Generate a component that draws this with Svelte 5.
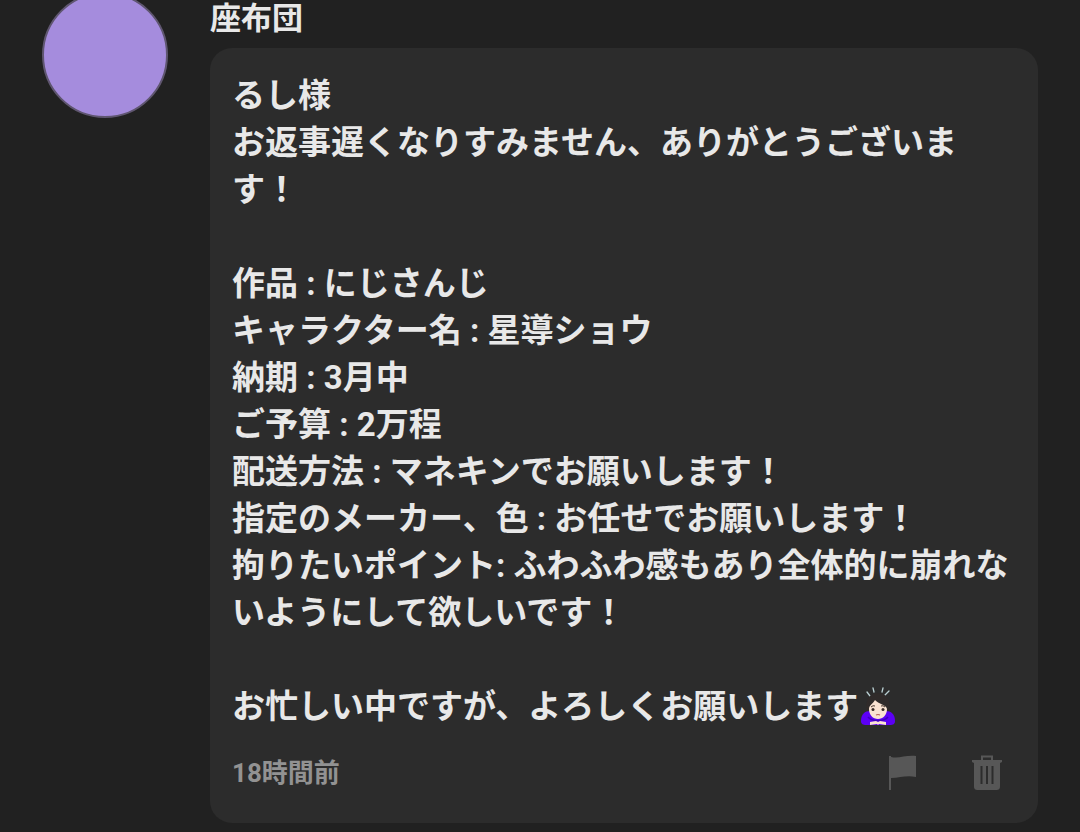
<script lang="ts">
	const author = '座布団'
	const postedAt = '18時間前'

	const body = [
		'るし様',
		'お返事遅くなりすみません、ありがとうございます！',
		'',
		'作品 : にじさんじ',
		'キャラクター名 : 星導ショウ',
		'納期 : 3月中',
		'ご予算 : 2万程',
		'配送方法 : マネキンでお願いします！',
		'指定のメーカー、色 : お任せでお願いします！',
		'拘りたいポイント: ふわふわ感もあり全体的に崩れないようにして欲しいです！',
		'',
		'お忙しい中ですが、よろしくお願いします'
	].join('\n')
</script>

<article class="comment">
	<div class="avatar"></div>

	<div class="content">
		<h2 class="author">{author}</h2>

		<div class="bubble">
			<p class="body">{body}<svg class="emoji" viewBox="0 0 36 40" role="img" aria-label="お辞儀">
					<g stroke="#b9cfd2" stroke-width="1.3" stroke-linecap="round">
						<path d="M7 5l3 4M13 1l1 4M23 1l-1 4M29 4l-4 4" />
					</g>
					<path d="M7 27C4 14 9 6 18 6s14 8 11 21z" fill="#302b2a" />
					<path d="M1 34c0-7 4-10 9-10h16c5 0 9 3 9 10 0 3-2 4-5 4H6c-3 0-5-1-5-4z" fill="#5c00f5" />
					<path d="M9 22c0-4 4-5 6-9 3 4 12 5 12 9 0 6-4 10-9 10S9 28 9 22z" fill="#fbe3d2" />
					<path d="M8 30c4 5 16 5 20 0" fill="none" stroke="#4200bd" stroke-width="1.5" />
					<path d="M10 35l6-1 2 1 2-1 6 1v3l-7-1-1 1-1-1-7 1z" fill="#fbe3d2" />
					<path d="M11 20q2-2 4-1M21 19q2-1 4 1" fill="none" stroke="#4a3930" stroke-width="1" />
					<circle cx="13" cy="22.500" r="1.500" fill="#3b2c27" />
					<circle cx="23" cy="22.500" r="1.500" fill="#3b2c27" />
					<path d="M16 28q2-1 4 0" fill="none" stroke="#b65e57" stroke-width="1.1" />
				</svg></p>

			<footer class="footer">
				<time class="time">{postedAt}</time>
				<div class="actions">
					<button class="action" type="button" aria-label="報告">
						<svg viewBox="0 0 36 36" fill="currentColor">
							<path d="M3 1h2v1c8 2 14-2 25-1v21c-10-2-16 1-25 1v12H3z" />
						</svg>
					</button>
					<button class="action" type="button" aria-label="削除">
						<svg viewBox="0 0 36 36">
							<path d="M12 6V1.500h10V6" fill="none" stroke="currentColor" stroke-width="2" />
							<path d="M2 5h30v2l-2 1v23c0 3-1 4-4 4H8c-3 0-4-1-4-4V8L2 7z" fill="currentColor" />
							<path d="M11.500 11v18M17 11v18M22.500 11v18" stroke="#2c2c2c" stroke-width="2" />
						</svg>
					</button>
				</div>
			</footer>
		</div>
	</div>
</article>

<style>
	:global(body) {
		background: #212121;
	}

	.comment {
		display: flex;
		align-items: flex-start;
		gap: 42px;
		padding: 0 42px 9px;
		font-family: Roboto, 'Noto Sans CJK JP', sans-serif;
		font-weight: 700;
		color: #e8e8e8;
	}

	.avatar {
		flex: none;
		box-sizing: border-box;
		width: 126px;
		height: 126px;
		margin-top: -8px;
		border: 2px solid #5f5670;
		border-radius: 50%;
		background: #a58cdd;
	}

	.content {
		flex: 1;
		min-width: 0;
	}

	.author {
		margin: 0 0 10px;
		font-size: 31px;
		line-height: 38px;
	}

	.bubble {
		padding: 24px 22px 30px;
		border-radius: 22px;
		background: #2c2c2c;
	}

	.body {
		margin: 0;
		font-size: 33px;
		line-height: 47px;
		white-space: pre-wrap;
		overflow-wrap: anywhere;
	}

	.emoji {
		width: 36px;
		height: 40px;
		margin-left: 2px;
		vertical-align: -9px;
	}

	.footer {
		display: flex;
		align-items: center;
		justify-content: space-between;
		margin-top: 23px;
		padding-right: 10px;
	}

	.time {
		font-size: 26px;
		line-height: 40px;
		color: #929292;
	}

	.actions {
		display: flex;
		gap: 48px;
	}

	.action {
		display: flex;
		padding: 0;
		border: none;
		background: none;
		color: #575757;
		cursor: pointer;
	}

	.action:hover {
		color: #6e6e6e;
	}

	.action svg {
		width: 36px;
		height: 36px;
	}
</style>
